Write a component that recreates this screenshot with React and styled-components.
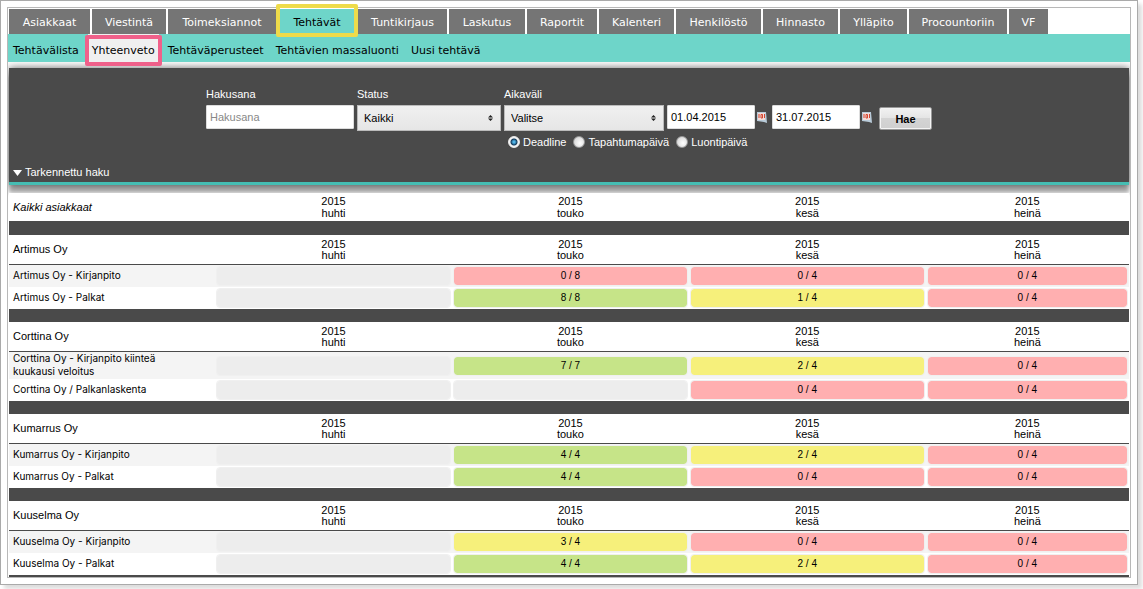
import styled, { createGlobalStyle, ThemeProvider } from 'styled-components'

const theme = {
    colors: {
        dark: '#4a4a4a',
        tab: '#757575',
        teal: '#6ed5c9',
        tealLine: '#45bdb3',
        none: '#ededed',
        red: '#ffafb0',
        yellow: '#f6f07b',
        green: '#c6e488',
    },
    fonts: {
        base: "'Liberation Sans', Arial, sans-serif",
        nav: "'DejaVu Sans', Verdana, sans-serif",
        row: "Inter, 'Liberation Sans', sans-serif",
    },
}

const GlobalStyle = createGlobalStyle`
    *, *::before, *::after {
        box-sizing: border-box;
    }

    body {
        margin: 0;
        background: #fff;
        color: #000;
        font-family: ${theme.fonts.base};
        font-size: 11px;
    }

    button, input, select {
        font-family: inherit;
        font-size: 11px;
        color: #000;
    }
`

const Page = styled.div`
    margin: 0 5px 5px 0;
    padding: 6px;
    border: 1px solid #aaa;
    box-shadow: 4px 4px 4px #ddd;
`

const Frame = styled.div`
    border: 1px solid #b8b8b8;
    padding-top: 1px;
`

const Tabs = styled.nav`
    display: flex;
    gap: 2px;
    padding: 0 1px;
    font-family: ${({ theme }) => theme.fonts.nav};
`

const Tab = styled.a`
    position: relative;
    width: ${({ $width }) => $width}px;
    height: 25px;
    line-height: 27px;
    text-align: center;
    white-space: nowrap;
    text-decoration: none;
    color: ${({ $active }) => ($active ? '#000' : '#fff')};
    background: ${({ theme, $active }) =>
        $active ? theme.colors.teal : theme.colors.tab};

    &::after {
        content: '';
        display: ${({ $active }) => ($active ? 'block' : 'none')};
        position: absolute;
        inset: -5px -2px -3px;
        border: 4px solid #eedb4a;
        border-radius: 2px;
    }
`

const SubNav = styled.nav`
    display: flex;
    gap: 4px;
    height: 28px;
    padding-left: 1px;
    background: ${({ theme }) => theme.colors.teal};
    font-family: ${({ theme }) => theme.fonts.nav};
`

const SubLink = styled.a`
    position: relative;
    margin: ${({ $active }) => ($active ? '0 1px' : '0')};
    padding: 0 4px;
    line-height: 34px;
    white-space: nowrap;
    text-decoration: none;
    color: #000;
    background: ${({ $active }) => ($active ? '#f0f0f0' : 'transparent')};

    &::after {
        content: '';
        display: ${({ $active }) => ($active ? 'block' : 'none')};
        position: absolute;
        inset: 1px -3px -4px;
        border: 4px solid #f0608a;
        border-radius: 2px;
    }
`

const Content = styled.main`
    padding: 6px 1px 0;
    overflow: hidden;
`

const SearchPanel = styled.form`
    height: 117px;
    margin-bottom: 8px;
    padding: 19px 4px 0;
    display: flex;
    flex-direction: column;
    justify-content: space-between;
    color: #fff;
    background: ${({ theme }) => theme.colors.dark};
    border-bottom: 3px solid ${({ theme }) => theme.colors.tealLine};
    box-shadow:
        0 0 8px rgba(0, 0, 0, 0.6),
        0 8px 4px rgba(0, 0, 0, 0.3);
`

const Fields = styled.div`
    display: flex;
    justify-content: center;
    gap: 3px;
`

const Field = styled.div`
    display: flex;
    flex-direction: column;
`

const FieldLabel = styled.label`
    height: 18px;
    line-height: 14px;
`

const FieldRow = styled.div`
    display: flex;
    gap: 3px;
`

const TextInput = styled.input`
    width: ${({ $wide }) => ($wide ? '148px' : '88px')};
    height: 24px;
    padding: 0 3px;
    border: 1px solid #ddd;
    border-radius: 1px;
    background: #fff;

    &::placeholder {
        color: #888;
        opacity: 1;
    }
`

const SelectBox = styled.div`
    position: relative;
    width: ${({ $wide }) => ($wide ? '160px' : '144px')};

    svg {
        position: absolute;
        right: 8px;
        top: 10px;
        pointer-events: none;
    }
`

const SelectInput = styled.select`
    appearance: none;
    display: block;
    width: 100%;
    height: 26px;
    padding: 0 20px 0 6px;
    border: 1px solid #bbb;
    border-radius: 0;
    background: linear-gradient(#f0f0f0, #e6e6e6);
`

const DateField = styled.div`
    display: flex;
    align-items: center;
    gap: 2px;
    height: 24px;
    margin-right: 2px;
`

const CalendarButton = styled.button`
    display: flex;
    padding: 0;
    border: 0;
    background: none;
`

const SearchButton = styled.button`
    width: 53px;
    height: 23px;
    margin: 2px 0 0 2px;
    padding: 0;
    font-size: 11px;
    font-weight: bold;
    border: 1px solid #999;
    border-radius: 2px;
    background: linear-gradient(#f2f2f2, #e4e4e4 50%, #d4d4d4 50%, #cfcfcf);
    box-shadow: inset 0 0 0 1px #f4f4f4;
`

const RadioRow = styled.div`
    display: flex;
    gap: 7px;
    padding: 4px 0 0 4px;
`

const RadioLabel = styled.label`
    display: flex;
    align-items: center;
    gap: 3px;
    line-height: 14px;
`

const Radio = styled.input`
    appearance: none;
    width: 12px;
    height: 12px;
    margin: 0;
    border: 1px solid #999;
    border-radius: 50%;
    background: radial-gradient(circle at 60% 60%, #fff, #ccc);

    &:checked {
        border-color: #eee;
        background: radial-gradient(
            circle,
            #4fb4e8 0 1px,
            #123a5c 3px,
            #f4f4f4 4px
        );
    }
`

const AdvancedToggle = styled.button`
    align-self: flex-start;
    display: flex;
    align-items: center;
    gap: 3px;
    padding: 0 0 3px;
    border: 0;
    background: none;
    color: #fff;
    line-height: 13px;
`

const Table = styled.table`
    width: 100%;
    table-layout: fixed;
    border-collapse: separate;
    border-spacing: 0;
    background: #fff;
    border-bottom: 2px solid ${({ theme }) => theme.colors.dark};
`

const Column = styled.col`
    width: ${({ $width }) => $width};
`

const HeadCell = styled.th`
    height: ${({ $summary }) => ($summary ? '28px' : '30px')};
    padding: 0;
    font-weight: normal;
    line-height: ${({ $summary }) => ($summary ? '12px' : '11px')};
    border-bottom: ${({ theme, $summary }) =>
        $summary ? '0' : `1px solid ${theme.colors.dark}`};
`

const HeadTitle = styled(HeadCell)`
    padding-left: 4px;
    text-align: left;
    font-style: ${({ $summary }) => ($summary ? 'italic' : 'normal')};
`

const Row = styled.tr`
    height: 22px;
    background: ${({ $odd }) => ($odd ? '#f4f4f4' : '#fff')};
`

const RowTitle = styled.th`
    padding: 0 30px 1px 4px;
    text-align: left;
    font-family: ${({ theme }) => theme.fonts.row};
    font-weight: normal;
    font-size: 10px;
    line-height: 13px;
`

const StatusCell = styled.td`
    padding: 1px;
`

const Status = styled.div`
    height: 20px;
    line-height: 17px;
    font-size: 10px;
    text-align: center;
    background: ${({ theme, $color }) => theme.colors[$color]};
    background-clip: padding-box;
    border: 1px solid #f0f0f0;
    border-radius: 4px;
`

const Spacer = styled.td`
    height: ${({ $tall }) => ($tall ? '14px' : '13px')};
    padding: 0;
    background: ${({ theme }) => theme.colors.dark};
`

const tabs = [
    { label: 'Asiakkaat', width: 81 },
    { label: 'Viestintä', width: 74 },
    { label: 'Toimeksiannot', width: 108 },
    { label: 'Tehtävät', width: 78 },
    { label: 'Tuntikirjaus', width: 89 },
    { label: 'Laskutus', width: 76 },
    { label: 'Raportit', width: 70 },
    { label: 'Kalenteri', width: 75 },
    { label: 'Henkilöstö', width: 85 },
    { label: 'Hinnasto', width: 75 },
    { label: 'Ylläpito', width: 67 },
    { label: 'Procountoriin', width: 98 },
    { label: 'VF', width: 39 },
]

const subLinks = [
    'Tehtävälista',
    'Yhteenveto',
    'Tehtäväperusteet',
    'Tehtävien massaluonti',
    'Uusi tehtävä',
]

const months = ['huhti', 'touko', 'kesä', 'heinä']

const none = ['none', '']

const groups = [
    {
        name: 'Artimus Oy',
        rows: [
            {
                name: 'Artimus Oy - Kirjanpito',
                cells: [none, ['red', '0 / 8'], ['red', '0 / 4'], ['red', '0 / 4']],
            },
            {
                name: 'Artimus Oy - Palkat',
                cells: [none, ['green', '8 / 8'], ['yellow', '1 / 4'], ['red', '0 / 4']],
            },
        ],
    },
    {
        name: 'Corttina Oy',
        rows: [
            {
                name: 'Corttina Oy - Kirjanpito kiinteä kuukausi veloitus',
                cells: [none, ['green', '7 / 7'], ['yellow', '2 / 4'], ['red', '0 / 4']],
            },
            {
                name: 'Corttina Oy / Palkanlaskenta',
                cells: [none, none, ['red', '0 / 4'], ['red', '0 / 4']],
            },
        ],
    },
    {
        name: 'Kumarrus Oy',
        rows: [
            {
                name: 'Kumarrus Oy - Kirjanpito',
                cells: [none, ['green', '4 / 4'], ['yellow', '2 / 4'], ['red', '0 / 4']],
            },
            {
                name: 'Kumarrus Oy - Palkat',
                cells: [none, ['green', '4 / 4'], ['red', '0 / 4'], ['red', '0 / 4']],
            },
        ],
    },
    {
        name: 'Kuuselma Oy',
        rows: [
            {
                name: 'Kuuselma Oy - Kirjanpito',
                cells: [none, ['yellow', '3 / 4'], ['red', '0 / 4'], ['red', '0 / 4']],
            },
            {
                name: 'Kuuselma Oy - Palkat',
                cells: [none, ['green', '4 / 4'], ['yellow', '2 / 4'], ['red', '0 / 4']],
            },
        ],
    },
]

function CalendarIcon() {
    return (
        <svg width="10" height="12" viewBox="0 0 10 12" aria-hidden="true">
            <path d="M0 1h9l1 11-3-1-7-1z" fill="#b9cbd9" />
            <path d="M1 2h7v7H1z" fill="#f3dcd8" />
            <path
                d="M2 3v4M7.5 3v4M4 3.5h1.5v3.5H4z"
                fill="none"
                stroke="#d4452f"
                strokeWidth="1"
            />
        </svg>
    )
}

function Select({ id, value, wide }) {
    return (
        <SelectBox $wide={wide}>
            <SelectInput id={id} defaultValue={value}>
                <option>{value}</option>
            </SelectInput>
            <svg width="5" height="6" viewBox="0 0 5 6" aria-hidden="true">
                <path d="M0 2.5L2.5 0L5 2.5zM0 3.5L2.5 6L5 3.5z" fill="#222" />
            </svg>
        </SelectBox>
    )
}

function DateInput({ label, value }) {
    return (
        <DateField>
            <TextInput type="text" aria-label={label} defaultValue={value} />
            <CalendarButton type="button" aria-label="Kalenteri">
                <CalendarIcon />
            </CalendarButton>
        </DateField>
    )
}

function Search() {
    return (
        <SearchPanel onSubmit={(e) => e.preventDefault()}>
            <Fields>
                <Field>
                    <FieldLabel htmlFor="keyword">Hakusana</FieldLabel>
                    <TextInput
                        id="keyword"
                        type="text"
                        placeholder="Hakusana"
                        $wide
                    />
                </Field>
                <Field>
                    <FieldLabel htmlFor="status">Status</FieldLabel>
                    <Select id="status" value="Kaikki" />
                </Field>
                <Field>
                    <FieldLabel htmlFor="range">Aikaväli</FieldLabel>
                    <FieldRow>
                        <Select id="range" value="Valitse" wide />
                        <DateInput label="Alkaen" value="01.04.2015" />
                        <DateInput label="Asti" value="31.07.2015" />
                        <SearchButton type="submit">Hae</SearchButton>
                    </FieldRow>
                    <RadioRow>
                        {['Deadline', 'Tapahtumapäivä', 'Luontipäivä'].map(
                            (text, i) => (
                                <RadioLabel key={text}>
                                    <Radio
                                        type="radio"
                                        name="dateType"
                                        defaultChecked={i === 0}
                                    />
                                    {text}
                                </RadioLabel>
                            )
                        )}
                    </RadioRow>
                </Field>
            </Fields>
            <AdvancedToggle type="button">
                <svg width="9" height="6" viewBox="0 0 9 6" aria-hidden="true">
                    <path d="M0 0h9L4.5 6z" fill="#fff" />
                </svg>
                Tarkennettu haku
            </AdvancedToggle>
        </SearchPanel>
    )
}

function HeadRow({ title, summary }) {
    return (
        <tr>
            <HeadTitle $summary={summary} scope="row">
                {title}
            </HeadTitle>
            {months.map((month) => (
                <HeadCell key={month} $summary={summary} scope="col">
                    2015
                    <br />
                    {month}
                </HeadCell>
            ))}
        </tr>
    )
}

function Group({ group, first }) {
    return (
        <tbody>
            <tr>
                <Spacer colSpan={5} $tall={first} />
            </tr>
            <HeadRow title={group.name} />
            {group.rows.map((row, i) => (
                <Row key={row.name} $odd={i % 2 === 0}>
                    <RowTitle scope="row">{row.name}</RowTitle>
                    {row.cells.map(([color, text], j) => (
                        <StatusCell key={months[j]}>
                            <Status $color={color}>{text}</Status>
                        </StatusCell>
                    ))}
                </Row>
            ))}
        </tbody>
    )
}

export default function App() {
    return (
        <ThemeProvider theme={theme}>
            <GlobalStyle />
            <Page>
                <Frame>
                    <Tabs>
                        {tabs.map(({ label, width }) => (
                            <Tab
                                key={label}
                                href="#"
                                $width={width}
                                $active={label === 'Tehtävät'}
                            >
                                {label}
                            </Tab>
                        ))}
                    </Tabs>
                    <SubNav>
                        {subLinks.map((link) => (
                            <SubLink
                                key={link}
                                href="#"
                                $active={link === 'Yhteenveto'}
                            >
                                {link}
                            </SubLink>
                        ))}
                    </SubNav>
                    <Content>
                        <Search />
                        <Table>
                            <colgroup>
                                <Column $width="18.4%" />
                                <Column $width="21.15%" />
                                <Column $width="21.15%" />
                                <Column $width="21.15%" />
                                <Column />
                            </colgroup>
                            <thead>
                                <HeadRow title="Kaikki asiakkaat" summary />
                            </thead>
                            {groups.map((group, i) => (
                                <Group
                                    key={group.name}
                                    group={group}
                                    first={i === 0}
                                />
                            ))}
                        </Table>
                    </Content>
                </Frame>
            </Page>
        </ThemeProvider>
    )
}
